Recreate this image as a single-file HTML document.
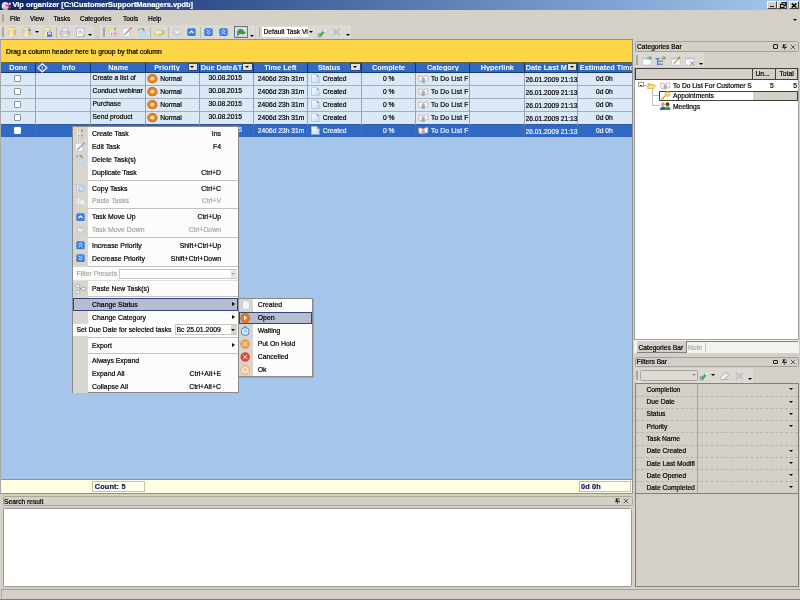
<!DOCTYPE html><html><head><meta charset="utf-8"><style>
*{box-sizing:border-box;margin:0;padding:0}
html,body{width:800px;height:600px;overflow:hidden;background:#d4d0c8;font-family:"Liberation Sans",sans-serif;font-size:6.7px;color:#000}
.ab{position:absolute}
.t{position:absolute;white-space:nowrap;line-height:1;-webkit-text-stroke-width:0.2px}
.hd{position:absolute;white-space:nowrap;line-height:1;color:#fff;font-weight:bold;font-size:7.3px;text-align:center}
.fb{position:absolute;width:8.5px;height:6.4px;background:#e2e0da;box-shadow:0 0 0 0.8px #23407a}
.fb:after{content:"";position:absolute;left:1.95px;top:1.8px;border-left:2.3px solid transparent;border-right:2.3px solid transparent;border-top:2.6px solid #000}
.cb{position:absolute;width:7px;height:6.7px;background:#fff;border:1px solid #8b9299;border-radius:1px}
.sep{position:absolute;height:1px;background:#c5c2bb}
.mi{position:absolute;white-space:nowrap;line-height:1;font-size:6.9px;-webkit-text-stroke-width:0.2px}
.sc{position:absolute;white-space:nowrap;line-height:1;text-align:right;font-size:6.9px;-webkit-text-stroke-width:0.2px}
.dis{color:#a7a6a4}
.arr{position:absolute;width:0;height:0;border-top:2.5px solid transparent;border-bottom:2.5px solid transparent;border-left:3px solid #000}
.dd{position:absolute;width:0;height:0;border-left:2.5px solid transparent;border-right:2.5px solid transparent;border-top:2.5px solid #000}
</style></head><body><div id="root" style="position:absolute;left:0;top:0;width:800px;height:600px;overflow:hidden;background:#d4d0c8;will-change:transform">
<div class="ab" style="left:0;top:0;width:800px;height:10px;background:linear-gradient(to right,#0a246a,#a6caf0)"></div>
<svg class="ab" style="left:1px;top:0.5px" width="11" height="9.5" viewBox="0 0 11 9.5"><ellipse cx="4.2" cy="4.8" rx="3.6" ry="3.9" fill="#e4d8f4"/><ellipse cx="4.5" cy="7.5" rx="3" ry="1.3" fill="#a8b0e0"/><path d="M4.5 4Q7 4.5 9.8 6.5" stroke="#c83848" stroke-width="1.6" fill="none"/><circle cx="8.8" cy="2.8" r="1.3" fill="#f0b0c8"/></svg>
<div class="t" style="left:12.5px;top:1.3px;font-weight:bold;font-size:7.4px;color:#fff">Vip organizer [C:\CustomerSupportManagers.vpdb]</div>
<div class="ab" style="left:767px;top:1px;width:10px;height:8.4px;background:#d4d0c8;border-top:1px solid #fff;border-left:1px solid #fff;border-right:1px solid #404040;border-bottom:1px solid #404040"></div>
<div class="ab" style="left:777.3px;top:1px;width:10px;height:8.4px;background:#d4d0c8;border-top:1px solid #fff;border-left:1px solid #fff;border-right:1px solid #404040;border-bottom:1px solid #404040"></div>
<div class="ab" style="left:788.5px;top:1px;width:10px;height:8.4px;background:#d4d0c8;border-top:1px solid #fff;border-left:1px solid #fff;border-right:1px solid #404040;border-bottom:1px solid #404040"></div>
<div class="ab" style="left:770px;top:6.2px;width:4px;height:1.3px;background:#202020"></div>
<svg class="ab" style="left:779.5px;top:2.3px" width="6" height="6" viewBox="0 0 6 6"><rect x="2" y="0.5" width="3.5" height="3" fill="none" stroke="#000" stroke-width="0.9"/><rect x="0.5" y="2.5" width="3.5" height="3" fill="#d4d0c8" stroke="#000" stroke-width="0.9"/></svg>
<svg class="ab" style="left:790.5px;top:2.5px" width="6" height="5" viewBox="0 0 6 5"><path d="M0.8 0.4L5.4 4.6M5.4 0.4L0.8 4.6" stroke="#000" stroke-width="1.3"/></svg>
<div class="ab" style="left:2px;top:13.5px;width:1.6px;height:8px;background:#aaa79f;border-radius:0.8px"></div>
<div class="t" style="left:10px;top:15.7px;font-size:6.5px">File</div>
<div class="t" style="left:30px;top:15.7px;font-size:6.5px">View</div>
<div class="t" style="left:53.6px;top:15.7px;font-size:6.5px">Tasks</div>
<div class="t" style="left:80px;top:15.7px;font-size:6.5px">Categories</div>
<div class="t" style="left:123px;top:15.7px;font-size:6.5px">Tools</div>
<div class="t" style="left:148px;top:15.7px;font-size:6.5px">Help</div>
<div class="dd" style="left:793px;top:19px"></div>
<div class="ab" style="left:0;top:25px;width:94px;height:14px;background:#dcd9d2"></div>
<div class="ab" style="left:100px;top:25px;width:155px;height:14px;background:#dcd9d2"></div>
<div class="ab" style="left:256px;top:25px;width:95px;height:14px;background:#dcd9d2"></div>
<div class="ab" style="left:2px;top:27.3px;width:1.6px;height:9.4px;background:#aaa79f;border-radius:0.8px"></div>
<div class="ab" style="left:103px;top:27.3px;width:1.6px;height:9.4px;background:#aaa79f;border-radius:0.8px"></div>
<div class="ab" style="left:258.5px;top:27.3px;width:1.6px;height:9.4px;background:#aaa79f;border-radius:0.8px"></div>
<div class="ab" style="left:55.5px;top:26.5px;width:1px;height:11.5px;background:#bcb9b1"></div>
<div class="ab" style="left:150.3px;top:26.5px;width:1px;height:11.5px;background:#bcb9b1"></div>
<div class="ab" style="left:168px;top:26.5px;width:1px;height:11.5px;background:#bcb9b1"></div>
<div class="ab" style="left:200px;top:26.5px;width:1px;height:11.5px;background:#bcb9b1"></div>
<svg class="ab" style="left:7px;top:27px" width="10" height="10" viewBox="0 0 10 10"><defs><linearGradient id="dbg" x1="0" x2="1"><stop offset="0" stop-color="#d8c898"/><stop offset="0.4" stop-color="#fffbe8"/><stop offset="1" stop-color="#c8b078"/></linearGradient></defs><path d="M1 2V8.2Q5 10.2 9 8.2V2Z" fill="url(#dbg)"/><ellipse cx="5" cy="2" rx="4" ry="1.5" fill="#f8ecc0" stroke="#c0a060" stroke-width="0.5"/><path d="M1 4.3Q5 6 9 4.3M1 6.4Q5 8.1 9 6.4" stroke="#d8c088" stroke-width="0.5" fill="none"/><circle cx="2" cy="2" r="1.6" fill="#ffe060"/></svg>
<svg class="ab" style="left:22px;top:27px" width="10" height="10" viewBox="0 0 10 10"><defs><linearGradient id="dbg" x1="0" x2="1"><stop offset="0" stop-color="#d8c898"/><stop offset="0.4" stop-color="#fffbe8"/><stop offset="1" stop-color="#c8b078"/></linearGradient></defs><path d="M1 2V8.2Q5 10.2 9 8.2V2Z" fill="url(#dbg)"/><ellipse cx="5" cy="2" rx="4" ry="1.5" fill="#f8ecc0" stroke="#c0a060" stroke-width="0.5"/><path d="M1 4.3Q5 6 9 4.3M1 6.4Q5 8.1 9 6.4" stroke="#d8c088" stroke-width="0.5" fill="none"/><path d="M6 0.5L9.5 3.5L7 4Z" fill="#5080c8"/></svg>
<div class="dd" style="left:34.6px;top:30.8px;border-left-width:2px;border-right-width:2px;border-top-width:2.2px"></div>
<svg class="ab" style="left:42.4px;top:27px" width="10" height="10" viewBox="0 0 10 10"><defs><linearGradient id="dbg" x1="0" x2="1"><stop offset="0" stop-color="#d8c898"/><stop offset="0.4" stop-color="#fffbe8"/><stop offset="1" stop-color="#c8b078"/></linearGradient></defs><path d="M1 2V8.2Q5 10.2 9 8.2V2Z" fill="url(#dbg)"/><ellipse cx="5" cy="2" rx="4" ry="1.5" fill="#f8ecc0" stroke="#c0a060" stroke-width="0.5"/><path d="M1 4.3Q5 6 9 4.3M1 6.4Q5 8.1 9 6.4" stroke="#d8c088" stroke-width="0.5" fill="none"/><rect x="5" y="5" width="5" height="5" fill="#6a78c0"/><rect x="6" y="5.5" width="3" height="1.8" fill="#e8e8f8"/></svg>
<svg class="ab" style="left:59.8px;top:27.7px" width="10" height="9" viewBox="0 0 10 9"><rect x="2.5" y="0.5" width="5" height="3" fill="#fff" stroke="#a0a0a0" stroke-width="0.5"/><rect x="0.5" y="3" width="9" height="4" rx="1" fill="#d8d8d8" stroke="#909090" stroke-width="0.5"/><rect x="2.5" y="6" width="5" height="2.5" fill="#fff" stroke="#a0a0a0" stroke-width="0.5"/><rect x="7.5" y="4" width="1" height="0.8" fill="#50a050"/></svg>
<svg class="ab" style="left:75.6px;top:27.7px" width="9" height="9" viewBox="0 0 9 9"><rect x="0.5" y="0.5" width="7.5" height="8" fill="#fff" stroke="#98a0b0" stroke-width="0.6"/><rect x="1.8" y="2" width="5" height="4.5" fill="#c8e4f8"/><path d="M2.5 4.5L4 3L6 5" stroke="#80b8e0" stroke-width="0.6" fill="none"/><path d="M6 8.5L8.5 6V8.5Z" fill="#e8a060"/></svg>
<div class="dd" style="left:87.6px;top:34.2px;border-left-width:2.1px;border-right-width:2.1px;border-top-width:2.3px"></div>
<svg class="ab" style="left:108px;top:27.4px" width="10" height="10" viewBox="0 0 10 10"><path d="M0.5 0.8H3.5L4.5 1.8H6.5V4.5H0.5Z" fill="#f8e488" stroke="#e0c860" stroke-width="0.4"/><rect x="6.5" y="0.5" width="1.5" height="2.5" fill="#8098c8"/><rect x="1.5" y="4" width="8" height="5.5" fill="#f4f4fa" stroke="#b8c0d8" stroke-width="0.5"/><circle cx="6.8" cy="6.8" r="2" fill="#fff" stroke="#e88890" stroke-width="0.8"/><circle cx="6.8" cy="6.8" r="0.8" fill="#505060"/><rect x="3" y="5.5" width="1" height="3" fill="#9098c0"/></svg>
<svg class="ab" style="left:122.3px;top:27.4px" width="11" height="10" viewBox="0 0 11 10"><rect x="0.5" y="1.2" width="7" height="8" fill="#fafbff" stroke="#b0b4c8" stroke-width="0.5"/><path d="M2.2 7.8L8 2.2" stroke="#9898b8" stroke-width="1.5"/><circle cx="8.8" cy="1.4" r="1.1" fill="#f09050"/></svg>
<svg class="ab" style="left:136.9px;top:27px" width="10" height="10" viewBox="0 0 10 10"><path d="M0.5 2.5L2.8 0.8L2.8 4Z" fill="#90a0d0"/><path d="M4 1.2Q7 0.5 8 3.2L6.2 3.6L8.8 5.2Z" fill="#48a860"/><ellipse cx="6" cy="7.2" rx="3.2" ry="2.5" fill="#c0e0f8" stroke="#98c8e8" stroke-width="0.4"/></svg>
<svg class="ab" style="left:153.8px;top:29.2px" width="11" height="7" viewBox="0 0 11 7"><path d="M0.5 3.5L4 0.8L9.5 2.2L10 4.5L7 5.2L6 6.5L4.5 5.5L1 5.2Z" fill="#f4e8a0" stroke="#c0a858" stroke-width="0.6"/><circle cx="3" cy="3.2" r="1.2" fill="#fff8d0"/><path d="M8.8 2.5L9.5 5M7 5.2L6.2 6.5" stroke="#908050" stroke-width="0.7"/></svg>
<svg class="ab" style="left:172.5px;top:28px" width="9" height="8" viewBox="0 0 9 8"><rect x="0.3" y="0.3" width="8.4" height="7.6" rx="1.5" fill="#d0d0d0"/><path d="M2.5 3L4.5 5L6.5 3" stroke="#fff" stroke-width="1.1" fill="none"/></svg>
<svg class="ab" style="left:186.7px;top:28px" width="9" height="8" viewBox="0 0 9 8"><rect x="0.3" y="0.3" width="8.4" height="7.6" rx="1.5" fill="#3b7fd8"/><path d="M2.5 5L4.5 3L6.5 5" stroke="#fff" stroke-width="1.1" fill="none"/></svg>
<svg class="ab" style="left:204px;top:28px" width="9" height="8" viewBox="0 0 9 8"><rect x="0.3" y="0.3" width="8.4" height="7.6" rx="1.5" fill="#3b7fd8"/><path d="M2.5 1.8L4.5 3.5L6.5 1.8M2.5 4.3L4.5 6L6.5 4.3" stroke="#fff" stroke-width="0.9" fill="none"/></svg>
<svg class="ab" style="left:218.8px;top:28px" width="9" height="8" viewBox="0 0 9 8"><rect x="0.3" y="0.3" width="8.4" height="7.6" rx="1.5" fill="#3b7fd8"/><path d="M2.5 3.7L4.5 2L6.5 3.7M2.5 6.2L4.5 4.5L6.5 6.2" stroke="#fff" stroke-width="0.9" fill="none"/></svg>
<div class="ab" style="left:234.1px;top:25.8px;width:14px;height:12.7px;background:#dcdce6;border:1px solid #6a7090"></div>
<svg class="ab" style="left:236px;top:28px" width="10" height="9" viewBox="0 0 10 9"><path d="M1.5 8.5V3Q3 0.5 6 1.5L9.5 5Q7 6.5 4 5.5" fill="#30a030" stroke="#208020" stroke-width="0.5"/><path d="M1.8 8.5V3" stroke="#90a090" stroke-width="0.8"/><path d="M1 8.7H8" stroke="#b0c0b0" stroke-width="0.5"/></svg>
<div class="dd" style="left:250.3px;top:35px;border-left-width:2.1px;border-right-width:2.1px;border-top-width:2.3px"></div>
<div class="ab" style="left:261.9px;top:26.9px;width:52px;height:10.5px;background:#fff"></div>
<div class="ab" style="left:308.1px;top:26.9px;width:5.7px;height:10.5px;background:#dedbd4"></div>
<div class="dd" style="left:308.8px;top:31px;border-left-width:2.1px;border-right-width:2.1px;border-top-width:2.3px"></div>
<div class="t" style="left:263.5px;top:29px;width:44px;overflow:hidden">Default Task View</div>
<svg class="ab" style="left:316.7px;top:27.6px" width="11" height="10" viewBox="0 0 11 10"><rect x="0.5" y="5" width="4" height="4.5" fill="#a0a8e0"/><path d="M3 8L8 2" stroke="#40b040" stroke-width="2.5"/><circle cx="8" cy="2.5" r="2" fill="#e8f0f8" stroke="#a8c0d8" stroke-width="0.5"/></svg>
<svg class="ab" style="left:331.7px;top:28.4px" width="9" height="8" viewBox="0 0 9 8"><path d="M1 1L8 7M8 1L1 7" stroke="#c0c0c0" stroke-width="1.8"/></svg>
<div class="dd" style="left:345.6px;top:34.4px;border-left-width:2.1px;border-right-width:2.1px;border-top-width:2.3px"></div>
<div class="ab" style="left:0;top:39px;width:633px;height:455px;background:#a6c5eb;border:1px solid #909090;border-left-color:#a8a8a8"></div>
<div class="ab" style="left:1px;top:40px;width:631px;height:22px;background:#fdd546"></div>
<div class="t" style="left:6px;top:48.5px;font-size:6.8px">Drag a column header here to group by that column</div>
<div class="ab" style="left:1px;top:62px;width:631px;height:11px;background:#316ac5;border-top:1px solid #6a6438;border-bottom:1px solid #1c3a6a"></div>
<div class="ab" style="left:1px;top:73px;width:631px;height:12px;background:#dbe8f5"></div>
<div class="ab" style="left:1px;top:85px;width:631px;height:1px;background:#a4adb8"></div>
<div class="ab" style="left:1px;top:86px;width:631px;height:12px;background:#dbe8f5"></div>
<div class="ab" style="left:1px;top:98px;width:631px;height:1px;background:#a4adb8"></div>
<div class="ab" style="left:1px;top:99px;width:631px;height:12px;background:#dbe8f5"></div>
<div class="ab" style="left:1px;top:111px;width:631px;height:1px;background:#a4adb8"></div>
<div class="ab" style="left:1px;top:112px;width:631px;height:12px;background:#dbe8f5"></div>
<div class="ab" style="left:1px;top:124px;width:631px;height:13px;background:#316ac5;border-top:1px solid #2c5aa6"></div>
<div class="ab" style="left:35.0px;top:63px;width:1px;height:10px;background:#1c3566"></div>
<div class="ab" style="left:35.0px;top:73px;width:1px;height:52px;background:#9aa3ad"></div>
<div class="ab" style="left:35.0px;top:125px;width:1px;height:12px;background:#4a6ea8"></div>
<div class="ab" style="left:90.0px;top:63px;width:1px;height:10px;background:#1c3566"></div>
<div class="ab" style="left:90.0px;top:73px;width:1px;height:52px;background:#9aa3ad"></div>
<div class="ab" style="left:90.0px;top:125px;width:1px;height:12px;background:#4a6ea8"></div>
<div class="ab" style="left:145.0px;top:63px;width:1px;height:10px;background:#1c3566"></div>
<div class="ab" style="left:145.0px;top:73px;width:1px;height:52px;background:#9aa3ad"></div>
<div class="ab" style="left:145.0px;top:125px;width:1px;height:12px;background:#4a6ea8"></div>
<div class="ab" style="left:199.0px;top:63px;width:1px;height:10px;background:#1c3566"></div>
<div class="ab" style="left:199.0px;top:73px;width:1px;height:52px;background:#9aa3ad"></div>
<div class="ab" style="left:199.0px;top:125px;width:1px;height:12px;background:#4a6ea8"></div>
<div class="ab" style="left:253.0px;top:63px;width:1px;height:10px;background:#1c3566"></div>
<div class="ab" style="left:253.0px;top:73px;width:1px;height:52px;background:#9aa3ad"></div>
<div class="ab" style="left:253.0px;top:125px;width:1px;height:12px;background:#4a6ea8"></div>
<div class="ab" style="left:307.0px;top:63px;width:1px;height:10px;background:#1c3566"></div>
<div class="ab" style="left:307.0px;top:73px;width:1px;height:52px;background:#9aa3ad"></div>
<div class="ab" style="left:307.0px;top:125px;width:1px;height:12px;background:#4a6ea8"></div>
<div class="ab" style="left:361.0px;top:63px;width:1px;height:10px;background:#1c3566"></div>
<div class="ab" style="left:361.0px;top:73px;width:1px;height:52px;background:#9aa3ad"></div>
<div class="ab" style="left:361.0px;top:125px;width:1px;height:12px;background:#4a6ea8"></div>
<div class="ab" style="left:415.0px;top:63px;width:1px;height:10px;background:#1c3566"></div>
<div class="ab" style="left:415.0px;top:73px;width:1px;height:52px;background:#9aa3ad"></div>
<div class="ab" style="left:415.0px;top:125px;width:1px;height:12px;background:#4a6ea8"></div>
<div class="ab" style="left:469.0px;top:63px;width:1px;height:10px;background:#1c3566"></div>
<div class="ab" style="left:469.0px;top:73px;width:1px;height:52px;background:#9aa3ad"></div>
<div class="ab" style="left:469.0px;top:125px;width:1px;height:12px;background:#4a6ea8"></div>
<div class="ab" style="left:524.0px;top:63px;width:1px;height:10px;background:#1c3566"></div>
<div class="ab" style="left:524.0px;top:73px;width:1px;height:52px;background:#9aa3ad"></div>
<div class="ab" style="left:524.0px;top:125px;width:1px;height:12px;background:#4a6ea8"></div>
<div class="ab" style="left:577.0px;top:63px;width:1px;height:10px;background:#1c3566"></div>
<div class="ab" style="left:577.0px;top:73px;width:1px;height:52px;background:#9aa3ad"></div>
<div class="ab" style="left:577.0px;top:125px;width:1px;height:12px;background:#4a6ea8"></div>
<div class="hd" style="left:1px;top:64.2px;width:34.5px;overflow:hidden;text-align:center">Done</div>
<div class="hd" style="left:47px;top:64.2px;width:43.5px;overflow:hidden;text-align:center">Info</div>
<div class="hd" style="left:90.5px;top:64.2px;width:55.5px;overflow:hidden;text-align:center">Name</div>
<div class="hd" style="left:146px;top:64.2px;width:42px;overflow:hidden;text-align:center">Priority</div>
<div class="hd" style="left:200.8px;top:64.2px;width:42.19999999999999px;overflow:hidden;text-align:left">Due Date&amp;T</div>
<div class="hd" style="left:253.3px;top:64.2px;width:54.19999999999999px;overflow:hidden;text-align:center">Time Left</div>
<div class="hd" style="left:307.5px;top:64.2px;width:43.19999999999999px;overflow:hidden;text-align:center">Status</div>
<div class="hd" style="left:361.3px;top:64.2px;width:54.5px;overflow:hidden;text-align:center">Complete</div>
<div class="hd" style="left:415.8px;top:64.2px;width:54.19999999999999px;overflow:hidden;text-align:center">Category</div>
<div class="hd" style="left:470px;top:64.2px;width:54.60000000000002px;overflow:hidden;text-align:center">Hyperlink</div>
<div class="hd" style="left:525.8px;top:64.2px;width:41.60000000000002px;overflow:hidden;text-align:left">Date Last M</div>
<div class="hd" style="left:579.8px;top:64.2px;width:52.200000000000045px;overflow:hidden;text-align:left">Estimated Time</div>
<svg class="ab" style="left:36.6px;top:62.8px" width="11" height="10" viewBox="0 0 11 10"><path d="M5.3 0.8L9.8 4.8L5.3 8.8L0.8 4.8Z" fill="#2a4fa0" stroke="#e8f0ff" stroke-width="1.3"/><rect x="4.7" y="2.8" width="1.2" height="4" fill="#a8c8f8"/></svg>
<div class="fb" style="left:188.5px;top:64.1px"></div>
<div class="fb" style="left:243px;top:64.1px"></div>
<div class="fb" style="left:351px;top:64.1px"></div>
<div class="fb" style="left:567.7px;top:64.1px"></div>
<div class="cb" style="left:14.3px;top:75.3px;"></div>
<div class="t" style="left:92.6px;top:75.1px;color:#000">Create a list of</div>
<svg class="ab" style="left:147px;top:73.7px" width="11" height="10" viewBox="0 0 11 10"><defs><radialGradient id="pg0" cx="0.5" cy="0.5" r="0.5"><stop offset="0" stop-color="#fffbe8"/><stop offset="0.3" stop-color="#fce0b0"/><stop offset="0.45" stop-color="#f09030"/><stop offset="0.85" stop-color="#e07818"/><stop offset="1" stop-color="#b85a10"/></radialGradient></defs><ellipse cx="5.4" cy="4.7" rx="5.1" ry="4.6" fill="url(#pg0)"/></svg>
<div class="t" style="left:160.2px;top:76.3px;color:#000">Normal</div>
<div class="t" style="left:208.5px;top:75.4px;color:#000">30.08.2015</div>
<div class="t" style="left:257.8px;top:76.3px;color:#000">2406d 23h 31m</div>
<svg class="ab" style="left:311px;top:74px" width="9" height="9" viewBox="0 0 9 9"><defs><linearGradient id="dg0" x1="0" y1="0" x2="1" y2="1"><stop offset="0" stop-color="#ffffff"/><stop offset="1" stop-color="#b8d8f4"/></linearGradient></defs><path d="M0.5 0.5H5.8L8.3 3V8.5H0.5Z" fill="url(#dg0)" stroke="#a8b8d0" stroke-width="0.6"/><path d="M5.8 0.5V3H8.3Z" fill="#8898b8"/></svg>
<div class="t" style="left:322.7px;top:76.3px;color:#000">Created</div>
<div class="t" style="left:383px;top:76.3px;color:#000">0 %</div>
<svg class="ab" style="left:417.8px;top:74.8px" width="11" height="8" viewBox="0 0 11 8"><path d="M0.6 1.2Q3 0.6 5.2 2.2V7Q3 5.8 1.2 6.4Z" fill="#fff" stroke="#e8a878" stroke-width="0.9"/><path d="M5.2 2.2Q7.5 0.2 9.9 0.8L9.6 5.8Q7.2 5.4 5.2 7Z" fill="#fff8f0" stroke="#e0b088" stroke-width="0.9"/><path d="M3.6 2.8Q4.6 3 5.2 3.6Q5.8 3 6.8 2.6V6.2Q5.8 6.4 5.2 7Q4.6 6.4 3.6 6.2Z" fill="#90b0e0"/><path d="M3.5 7.2H7" stroke="#6070a0" stroke-width="0.6"/></svg>
<div class="t" style="left:431px;top:76.3px;color:#000;letter-spacing:0.15px">To Do List F</div>
<div class="t" style="left:525.5px;top:76.7px;color:#000;width:52px;overflow:hidden">26.01.2009 21:13</div>
<div class="t" style="left:596px;top:76.3px;color:#000">0d 0h</div>
<div class="cb" style="left:14.3px;top:88.3px;"></div>
<div class="t" style="left:92.6px;top:88.1px;color:#000">Conduct webinar</div>
<svg class="ab" style="left:147px;top:86.7px" width="11" height="10" viewBox="0 0 11 10"><defs><radialGradient id="pg1" cx="0.5" cy="0.5" r="0.5"><stop offset="0" stop-color="#fffbe8"/><stop offset="0.3" stop-color="#fce0b0"/><stop offset="0.45" stop-color="#f09030"/><stop offset="0.85" stop-color="#e07818"/><stop offset="1" stop-color="#b85a10"/></radialGradient></defs><ellipse cx="5.4" cy="4.7" rx="5.1" ry="4.6" fill="url(#pg1)"/></svg>
<div class="t" style="left:160.2px;top:89.3px;color:#000">Normal</div>
<div class="t" style="left:208.5px;top:88.4px;color:#000">30.08.2015</div>
<div class="t" style="left:257.8px;top:89.3px;color:#000">2406d 23h 31m</div>
<svg class="ab" style="left:311px;top:87px" width="9" height="9" viewBox="0 0 9 9"><defs><linearGradient id="dg1" x1="0" y1="0" x2="1" y2="1"><stop offset="0" stop-color="#ffffff"/><stop offset="1" stop-color="#b8d8f4"/></linearGradient></defs><path d="M0.5 0.5H5.8L8.3 3V8.5H0.5Z" fill="url(#dg1)" stroke="#a8b8d0" stroke-width="0.6"/><path d="M5.8 0.5V3H8.3Z" fill="#8898b8"/></svg>
<div class="t" style="left:322.7px;top:89.3px;color:#000">Created</div>
<div class="t" style="left:383px;top:89.3px;color:#000">0 %</div>
<svg class="ab" style="left:417.8px;top:87.8px" width="11" height="8" viewBox="0 0 11 8"><path d="M0.6 1.2Q3 0.6 5.2 2.2V7Q3 5.8 1.2 6.4Z" fill="#fff" stroke="#e8a878" stroke-width="0.9"/><path d="M5.2 2.2Q7.5 0.2 9.9 0.8L9.6 5.8Q7.2 5.4 5.2 7Z" fill="#fff8f0" stroke="#e0b088" stroke-width="0.9"/><path d="M3.6 2.8Q4.6 3 5.2 3.6Q5.8 3 6.8 2.6V6.2Q5.8 6.4 5.2 7Q4.6 6.4 3.6 6.2Z" fill="#90b0e0"/><path d="M3.5 7.2H7" stroke="#6070a0" stroke-width="0.6"/></svg>
<div class="t" style="left:431px;top:89.3px;color:#000;letter-spacing:0.15px">To Do List F</div>
<div class="t" style="left:525.5px;top:89.7px;color:#000;width:52px;overflow:hidden">26.01.2009 21:13</div>
<div class="t" style="left:596px;top:89.3px;color:#000">0d 0h</div>
<div class="cb" style="left:14.3px;top:101.3px;"></div>
<div class="t" style="left:92.6px;top:101.1px;color:#000">Purchase</div>
<svg class="ab" style="left:147px;top:99.7px" width="11" height="10" viewBox="0 0 11 10"><defs><radialGradient id="pg2" cx="0.5" cy="0.5" r="0.5"><stop offset="0" stop-color="#fffbe8"/><stop offset="0.3" stop-color="#fce0b0"/><stop offset="0.45" stop-color="#f09030"/><stop offset="0.85" stop-color="#e07818"/><stop offset="1" stop-color="#b85a10"/></radialGradient></defs><ellipse cx="5.4" cy="4.7" rx="5.1" ry="4.6" fill="url(#pg2)"/></svg>
<div class="t" style="left:160.2px;top:102.3px;color:#000">Normal</div>
<div class="t" style="left:208.5px;top:101.4px;color:#000">30.08.2015</div>
<div class="t" style="left:257.8px;top:102.3px;color:#000">2406d 23h 31m</div>
<svg class="ab" style="left:311px;top:100px" width="9" height="9" viewBox="0 0 9 9"><defs><linearGradient id="dg2" x1="0" y1="0" x2="1" y2="1"><stop offset="0" stop-color="#ffffff"/><stop offset="1" stop-color="#b8d8f4"/></linearGradient></defs><path d="M0.5 0.5H5.8L8.3 3V8.5H0.5Z" fill="url(#dg2)" stroke="#a8b8d0" stroke-width="0.6"/><path d="M5.8 0.5V3H8.3Z" fill="#8898b8"/></svg>
<div class="t" style="left:322.7px;top:102.3px;color:#000">Created</div>
<div class="t" style="left:383px;top:102.3px;color:#000">0 %</div>
<svg class="ab" style="left:417.8px;top:100.8px" width="11" height="8" viewBox="0 0 11 8"><path d="M0.6 1.2Q3 0.6 5.2 2.2V7Q3 5.8 1.2 6.4Z" fill="#fff" stroke="#e8a878" stroke-width="0.9"/><path d="M5.2 2.2Q7.5 0.2 9.9 0.8L9.6 5.8Q7.2 5.4 5.2 7Z" fill="#fff8f0" stroke="#e0b088" stroke-width="0.9"/><path d="M3.6 2.8Q4.6 3 5.2 3.6Q5.8 3 6.8 2.6V6.2Q5.8 6.4 5.2 7Q4.6 6.4 3.6 6.2Z" fill="#90b0e0"/><path d="M3.5 7.2H7" stroke="#6070a0" stroke-width="0.6"/></svg>
<div class="t" style="left:431px;top:102.3px;color:#000;letter-spacing:0.15px">To Do List F</div>
<div class="t" style="left:525.5px;top:102.7px;color:#000;width:52px;overflow:hidden">26.01.2009 21:13</div>
<div class="t" style="left:596px;top:102.3px;color:#000">0d 0h</div>
<div class="cb" style="left:14.3px;top:114.3px;"></div>
<div class="t" style="left:92.6px;top:114.1px;color:#000">Send product</div>
<svg class="ab" style="left:147px;top:112.7px" width="11" height="10" viewBox="0 0 11 10"><defs><radialGradient id="pg3" cx="0.5" cy="0.5" r="0.5"><stop offset="0" stop-color="#fffbe8"/><stop offset="0.3" stop-color="#fce0b0"/><stop offset="0.45" stop-color="#f09030"/><stop offset="0.85" stop-color="#e07818"/><stop offset="1" stop-color="#b85a10"/></radialGradient></defs><ellipse cx="5.4" cy="4.7" rx="5.1" ry="4.6" fill="url(#pg3)"/></svg>
<div class="t" style="left:160.2px;top:115.3px;color:#000">Normal</div>
<div class="t" style="left:208.5px;top:114.4px;color:#000">30.08.2015</div>
<div class="t" style="left:257.8px;top:115.3px;color:#000">2406d 23h 31m</div>
<svg class="ab" style="left:311px;top:113px" width="9" height="9" viewBox="0 0 9 9"><defs><linearGradient id="dg3" x1="0" y1="0" x2="1" y2="1"><stop offset="0" stop-color="#ffffff"/><stop offset="1" stop-color="#b8d8f4"/></linearGradient></defs><path d="M0.5 0.5H5.8L8.3 3V8.5H0.5Z" fill="url(#dg3)" stroke="#a8b8d0" stroke-width="0.6"/><path d="M5.8 0.5V3H8.3Z" fill="#8898b8"/></svg>
<div class="t" style="left:322.7px;top:115.3px;color:#000">Created</div>
<div class="t" style="left:383px;top:115.3px;color:#000">0 %</div>
<svg class="ab" style="left:417.8px;top:113.8px" width="11" height="8" viewBox="0 0 11 8"><path d="M0.6 1.2Q3 0.6 5.2 2.2V7Q3 5.8 1.2 6.4Z" fill="#fff" stroke="#e8a878" stroke-width="0.9"/><path d="M5.2 2.2Q7.5 0.2 9.9 0.8L9.6 5.8Q7.2 5.4 5.2 7Z" fill="#fff8f0" stroke="#e0b088" stroke-width="0.9"/><path d="M3.6 2.8Q4.6 3 5.2 3.6Q5.8 3 6.8 2.6V6.2Q5.8 6.4 5.2 7Q4.6 6.4 3.6 6.2Z" fill="#90b0e0"/><path d="M3.5 7.2H7" stroke="#6070a0" stroke-width="0.6"/></svg>
<div class="t" style="left:431px;top:115.3px;color:#000;letter-spacing:0.15px">To Do List F</div>
<div class="t" style="left:525.5px;top:115.7px;color:#000;width:52px;overflow:hidden">26.01.2009 21:13</div>
<div class="t" style="left:596px;top:115.3px;color:#000">0d 0h</div>
<div class="cb" style="left:14.3px;top:127.3px;border-color:#fff"></div>
<svg class="ab" style="left:147px;top:125.7px" width="11" height="10" viewBox="0 0 11 10"><defs><radialGradient id="pg4" cx="0.5" cy="0.5" r="0.5"><stop offset="0" stop-color="#fffbe8"/><stop offset="0.3" stop-color="#fce0b0"/><stop offset="0.45" stop-color="#f09030"/><stop offset="0.85" stop-color="#e07818"/><stop offset="1" stop-color="#b85a10"/></radialGradient></defs><ellipse cx="5.4" cy="4.7" rx="5.1" ry="4.6" fill="url(#pg4)"/></svg>
<div class="t" style="left:160.2px;top:128.3px;color:#eef3fc">Normal</div>
<div class="t" style="left:208.5px;top:127.4px;color:#eef3fc">30.08.2015</div>
<div class="t" style="left:257.8px;top:128.3px;color:#eef3fc">2406d 23h 31m</div>
<svg class="ab" style="left:311px;top:126px" width="9" height="9" viewBox="0 0 9 9"><defs><linearGradient id="dg4" x1="0" y1="0" x2="1" y2="1"><stop offset="0" stop-color="#ffffff"/><stop offset="1" stop-color="#b8d8f4"/></linearGradient></defs><path d="M0.5 0.5H5.8L8.3 3V8.5H0.5Z" fill="url(#dg4)" stroke="#a8b8d0" stroke-width="0.6"/><path d="M5.8 0.5V3H8.3Z" fill="#8898b8"/></svg>
<div class="t" style="left:322.7px;top:128.3px;color:#eef3fc">Created</div>
<div class="t" style="left:383px;top:128.3px;color:#eef3fc">0 %</div>
<svg class="ab" style="left:417.8px;top:126.8px" width="11" height="8" viewBox="0 0 11 8"><path d="M0.6 1.2Q3 0.6 5.2 2.2V7Q3 5.8 1.2 6.4Z" fill="#fff" stroke="#e8a878" stroke-width="0.9"/><path d="M5.2 2.2Q7.5 0.2 9.9 0.8L9.6 5.8Q7.2 5.4 5.2 7Z" fill="#fff8f0" stroke="#e0b088" stroke-width="0.9"/><path d="M3.6 2.8Q4.6 3 5.2 3.6Q5.8 3 6.8 2.6V6.2Q5.8 6.4 5.2 7Q4.6 6.4 3.6 6.2Z" fill="#90b0e0"/><path d="M3.5 7.2H7" stroke="#6070a0" stroke-width="0.6"/></svg>
<div class="t" style="left:431px;top:128.3px;color:#eef3fc;letter-spacing:0.15px">To Do List F</div>
<div class="t" style="left:525.5px;top:128.7px;color:#eef3fc;width:52px;overflow:hidden">26.01.2009 21:13</div>
<div class="t" style="left:596px;top:128.3px;color:#eef3fc">0d 0h</div>
<div class="ab" style="left:1px;top:479px;width:631px;height:1px;background:#909090"></div>
<div class="ab" style="left:1px;top:480px;width:631px;height:13px;background:#fffee0"></div>
<div class="ab" style="left:92px;top:481.3px;width:52.5px;height:10.5px;border:1px solid #c4c2a8;background:#fffff0"></div>
<div class="t" style="left:94.8px;top:483.2px;color:#10105a;font-weight:bold;font-size:7.3px;letter-spacing:0.15px">Count: 5</div>
<div class="ab" style="left:578.5px;top:481.3px;width:52.5px;height:10.5px;border:1px solid #c4c2a8;background:#fffff0"></div>
<div class="t" style="left:581px;top:483.2px;color:#10105a;font-weight:bold;font-size:7.3px;letter-spacing:0.15px">0d 0h</div>
<div class="ab" style="left:2.5px;top:496px;width:630px;height:9.5px;border:1px solid #aca899;border-radius:1.5px"></div>
<svg class="ab" style="left:614.5px;top:498.3px" width="5" height="6" viewBox="0 0 5 6"><rect x="0.8" y="0.3" width="3.4" height="3.2" fill="#202020"/><rect x="2.6" y="0.6" width="1.2" height="2.6" fill="#d4d0c8"/><rect x="0" y="3.3" width="5" height="0.8" fill="#202020"/><rect x="2.1" y="4" width="0.8" height="1.8" fill="#404040"/></svg>
<svg class="ab" style="left:623px;top:498.3px" width="6" height="6" viewBox="0 0 6 6"><path d="M0.8 0.8L5.2 5.2M5.2 0.8L0.8 5.2" stroke="#404040" stroke-width="0.8"/></svg>
<div class="t" style="left:4px;top:498.5px">Search result</div>
<div class="ab" style="left:2.5px;top:507.5px;width:629px;height:79.5px;background:#fff;border:1px solid #989898;border-radius:1.5px"></div>
<div class="ab" style="left:0.5px;top:589px;width:800px;height:10px;border-top:1px solid #a0a0a0;border-left:1px solid #a8a8a8"></div>
<div class="ab" style="left:0;top:599px;width:800px;height:1px;background:#808080"></div>
<div class="ab" style="left:634.5px;top:41px;width:164px;height:10.5px;border:1px solid #a0a0a0;border-radius:1.5px"></div>
<div class="t" style="left:637px;top:43.8px">Categories Bar</div>
<div class="ab" style="left:634px;top:68px;width:165px;height:272px;background:#fff;border:1px solid #a0a0a0;border-top:0"></div>
<div class="ab" style="left:635px;top:68px;width:163px;height:12px;background:#d4d0c8;border:1px solid #404040"></div>
<div class="ab" style="left:752px;top:69px;width:1px;height:10px;background:#404040"></div>
<div class="ab" style="left:775px;top:69px;width:1px;height:10px;background:#404040"></div>
<div class="t" style="left:755.5px;top:71px">Un...</div>
<div class="t" style="left:779.5px;top:71px">Total</div>
<div class="t" style="left:673px;top:82.5px">To Do List For Customer S</div>
<div class="t" style="left:770px;top:82.5px">5</div>
<div class="t" style="left:793.2px;top:82.5px">5</div>
<div class="ab" style="left:752.5px;top:90.5px;width:45px;height:10px;background:#d4d0c8"></div>
<div class="ab" style="left:658.7px;top:90.5px;width:139.3px;height:10.3px;border:1px solid #404040"></div>
<div class="t" style="left:673px;top:92.5px">Appointments</div>
<div class="t" style="left:673px;top:103.5px">Meetings</div>
<div class="ab" style="left:773px;top:44.400000000000006px;width:4.6px;height:4.2px;border:1px solid #202020;border-radius:1px"></div>
<svg class="ab" style="left:781.5px;top:44.0px" width="5" height="6" viewBox="0 0 5 6"><rect x="0.8" y="0.3" width="3.4" height="3.2" fill="#202020"/><rect x="2.6" y="0.6" width="1.2" height="2.6" fill="#d4d0c8"/><rect x="0" y="3.3" width="5" height="0.8" fill="#202020"/><rect x="2.1" y="4" width="0.8" height="1.8" fill="#404040"/></svg>
<svg class="ab" style="left:789.5px;top:44.0px" width="6" height="6" viewBox="0 0 6 6"><path d="M0.8 0.8L5.2 5.2M5.2 0.8L0.8 5.2" stroke="#404040" stroke-width="0.8"/></svg>
<div class="ab" style="left:773px;top:359.8px;width:4.6px;height:4.2px;border:1px solid #202020;border-radius:1px"></div>
<svg class="ab" style="left:781.5px;top:359.40000000000003px" width="5" height="6" viewBox="0 0 5 6"><rect x="0.8" y="0.3" width="3.4" height="3.2" fill="#202020"/><rect x="2.6" y="0.6" width="1.2" height="2.6" fill="#d4d0c8"/><rect x="0" y="3.3" width="5" height="0.8" fill="#202020"/><rect x="2.1" y="4" width="0.8" height="1.8" fill="#404040"/></svg>
<svg class="ab" style="left:789.5px;top:359.40000000000003px" width="6" height="6" viewBox="0 0 6 6"><path d="M0.8 0.8L5.2 5.2M5.2 0.8L0.8 5.2" stroke="#404040" stroke-width="0.8"/></svg>
<div class="ab" style="left:634.5px;top:52.4px;width:69.5px;height:14.7px;background:#dcd9d2"></div>
<div class="ab" style="left:636.4px;top:55.2px;width:1.5px;height:9.6px;background:#a8a59e"></div>
<svg class="ab" style="left:641.6px;top:55.5px" width="10" height="10" viewBox="0 0 10 10"><rect x="0.5" y="2" width="8.5" height="7" fill="#fbfcfe" stroke="#a8b4c8" stroke-width="0.5"/><rect x="0.5" y="2" width="8.5" height="1.4" fill="#a8c8e8"/><path d="M5.5 2H8.5M7.5 0.5L9.5 2L7.5 3.5" stroke="#30a040" stroke-width="1" fill="none"/></svg>
<svg class="ab" style="left:655.4px;top:55.5px" width="11" height="10" viewBox="0 0 11 10"><rect x="0.5" y="2" width="4" height="1.2" fill="#5078c0"/><rect x="2" y="3" width="1.2" height="6.5" fill="#5078c0"/><rect x="3" y="4.5" width="5" height="1.5" fill="#7090d0"/><rect x="3" y="7.5" width="5" height="1.5" fill="#7090d0"/><path d="M6.5 2H9.5M8.5 0.5L10.5 2L8.5 3.5" stroke="#30a040" stroke-width="1" fill="none"/></svg>
<svg class="ab" style="left:670.7px;top:55.5px" width="10" height="10" viewBox="0 0 10 10"><rect x="0.5" y="2" width="8.5" height="7" fill="#fbfcfe" stroke="#a8b4c8" stroke-width="0.5"/><rect x="0.5" y="2" width="8.5" height="1.4" fill="#a8c8e8"/><path d="M2.5 8L8.5 1.5" stroke="#d0a040" stroke-width="1.2"/><path d="M7.8 2.2L9 1" stroke="#e04040" stroke-width="1.3"/></svg>
<svg class="ab" style="left:685px;top:55.5px" width="10" height="10" viewBox="0 0 10 10"><rect x="0.5" y="2" width="8.5" height="7" fill="#fbfcfe" stroke="#a8b4c8" stroke-width="0.5"/><rect x="0.5" y="2" width="8.5" height="1.4" fill="#a8c8e8"/><path d="M5.5 5.5L9 9M9 5.5L5.5 9" stroke="#e05050" stroke-width="1"/></svg>
<div class="dd" style="left:699.2px;top:62.9px;border-left-width:2.1px;border-right-width:2.1px;border-top-width:2.3px"></div>
<div class="ab" style="left:638.4px;top:82.1px;width:5.2px;height:5.3px;border:1px solid #a0a0a0;background:#fff"></div>
<div class="ab" style="left:639.8px;top:84.5px;width:2.6px;height:0.7px;background:#404040"></div>
<div class="ab" style="left:643.6px;top:84.5px;width:3.5px;height:0.8px;background:#c0c0c0"></div>
<div class="ab" style="left:652px;top:88.5px;width:0.8px;height:17px;background:#c0c0c0"></div>
<div class="ab" style="left:652.5px;top:95px;width:6px;height:0.8px;background:#c0c0c0"></div>
<div class="ab" style="left:652.5px;top:105px;width:7px;height:0.8px;background:#c0c0c0"></div>
<svg class="ab" style="left:647.1px;top:82px" width="9" height="7" viewBox="0 0 9 7"><path d="M0.5 1H3L4 2H7V6.5H0.5Z" fill="#e8c050"/><path d="M1.5 3H8.7L7.5 6.5H0.5Z" fill="#f8e080" stroke="#c8a040" stroke-width="0.4"/></svg>
<svg class="ab" style="left:660.2px;top:81.5px" width="11" height="8" viewBox="0 0 11 8"><path d="M0.6 1.2Q3 0.6 5.2 2.2V7Q3 5.8 1.2 6.4Z" fill="#fff" stroke="#e8a878" stroke-width="0.9"/><path d="M5.2 2.2Q7.5 0.2 9.9 0.8L9.6 5.8Q7.2 5.4 5.2 7Z" fill="#fff8f0" stroke="#e0b088" stroke-width="0.9"/><path d="M3.6 2.8Q4.6 3 5.2 3.6Q5.8 3 6.8 2.6V6.2Q5.8 6.4 5.2 7Q4.6 6.4 3.6 6.2Z" fill="#90b0e0"/></svg>
<svg class="ab" style="left:660.2px;top:91.3px" width="11" height="9" viewBox="0 0 11 9"><circle cx="7.5" cy="3" r="2.5" fill="#f0d060" stroke="#c09830" stroke-width="0.5"/><circle cx="7.8" cy="2.7" r="0.8" fill="#fff"/><path d="M5.8 4.5L1 8.5M2.5 7.3L3.5 8.3M3.5 6.5L4.3 7.3" stroke="#d0a840" stroke-width="1.1"/></svg>
<svg class="ab" style="left:660.2px;top:102.2px" width="11" height="8" viewBox="0 0 11 8"><circle cx="3" cy="2.2" r="1.9" fill="#e8a040"/><path d="M0 8Q0 4.5 3 4.5Q6 4.5 6 8Z" fill="#3060c0"/><circle cx="7.5" cy="2.2" r="1.9" fill="#703010"/><path d="M4.5 8Q4.5 4.5 7.5 4.5Q10.5 4.5 10.5 8Z" fill="#30a040"/></svg>
<div class="ab" style="left:634px;top:340px;width:165px;height:13px;background:#f4f2ec"></div>
<div class="ab" style="left:686px;top:341px;width:112px;height:1px;background:#808080"></div>
<div class="ab" style="left:636.5px;top:341px;width:50px;height:12px;background:#d4d0c8;border-right:1px solid #808080;border-bottom:1px solid #808080"></div>
<div class="t" style="left:638.5px;top:345px">Categories Bar</div>
<div class="t dis" style="left:688px;top:345px">Note</div>
<div class="ab" style="left:705px;top:343px;width:1px;height:9px;background:#c8c5be"></div>
<div class="ab" style="left:634.5px;top:356.5px;width:164px;height:10px;border:1px solid #a0a0a0;border-radius:1.5px"></div>
<div class="t" style="left:636.6px;top:358.8px">Filters Bar</div>
<div class="ab" style="left:634.5px;top:367.5px;width:118.5px;height:15.3px;background:#dcd9d2"></div>
<div class="ab" style="left:636.4px;top:370.5px;width:1.5px;height:9.6px;background:#a8a59e"></div>
<div class="ab" style="left:639.5px;top:369.7px;width:58px;height:11.3px;border:1px solid #a8a59e;border-radius:1.5px;background:#dedbd4"></div>
<div class="dd" style="left:691.8px;top:374.3px;border-top-color:#909090;border-left-width:2px;border-right-width:2px;border-top-width:2.2px"></div>
<svg class="ab" style="left:699.2px;top:370.6px" width="11" height="10" viewBox="0 0 11 10"><rect x="0.5" y="5" width="4" height="4.5" fill="#a0a8e0"/><path d="M3 8L8 2" stroke="#40b040" stroke-width="2.5"/><circle cx="8" cy="2.5" r="2" fill="#e8f0f8" stroke="#a8c0d8" stroke-width="0.5"/></svg>
<div class="dd" style="left:710.8px;top:374.3px;border-left-width:2px;border-right-width:2px;border-top-width:2.2px"></div>
<svg class="ab" style="left:718.9px;top:371.9px" width="10" height="8" viewBox="0 0 10 8"><path d="M1 6L6 1Q7 0.2 8 1L9 2Q9.8 3 9 4L5 7.5H1.5Z" fill="#f0f0f0" stroke="#909090" stroke-width="0.6"/><path d="M4 7.5H9.5" stroke="#a0a0a0" stroke-width="0.6"/></svg>
<svg class="ab" style="left:734.6px;top:372px" width="9" height="8" viewBox="0 0 9 8"><path d="M1 1L8 7M8 1L1 7" stroke="#c0c0c0" stroke-width="1.8"/></svg>
<div class="dd" style="left:748.2px;top:378px;border-left-width:2.1px;border-right-width:2.1px;border-top-width:2.3px"></div>
<div class="ab" style="left:634.5px;top:383px;width:164px;height:204px;border:1px solid #808080"></div>
<div class="t" style="left:646.5px;top:386.8px">Completion</div>
<div class="ab" style="left:635.5px;top:395.57px;width:162px;height:1px;border-top:1px dashed #b8b5ae"></div>
<div class="dd" style="left:789px;top:388.3px;border-left-width:2.7px;border-right-width:2.7px;border-top-width:2.8px"></div>
<div class="t" style="left:646.5px;top:399.13px">Due Date</div>
<div class="ab" style="left:635.5px;top:407.84px;width:162px;height:1px;border-top:1px dashed #b8b5ae"></div>
<div class="dd" style="left:789px;top:400.57px;border-left-width:2.7px;border-right-width:2.7px;border-top-width:2.8px"></div>
<div class="t" style="left:646.5px;top:411.46000000000004px">Status</div>
<div class="ab" style="left:635.5px;top:420.11px;width:162px;height:1px;border-top:1px dashed #b8b5ae"></div>
<div class="dd" style="left:789px;top:412.84000000000003px;border-left-width:2.7px;border-right-width:2.7px;border-top-width:2.8px"></div>
<div class="t" style="left:646.5px;top:423.79px">Priority</div>
<div class="ab" style="left:635.5px;top:432.38px;width:162px;height:1px;border-top:1px dashed #b8b5ae"></div>
<div class="dd" style="left:789px;top:425.11px;border-left-width:2.7px;border-right-width:2.7px;border-top-width:2.8px"></div>
<div class="t" style="left:646.5px;top:436.12px">Task Name</div>
<div class="ab" style="left:635.5px;top:444.65px;width:162px;height:1px;border-top:1px dashed #b8b5ae"></div>
<div class="t" style="left:646.5px;top:448.45px">Date Created</div>
<div class="ab" style="left:635.5px;top:456.91999999999996px;width:162px;height:1px;border-top:1px dashed #b8b5ae"></div>
<div class="dd" style="left:789px;top:449.65px;border-left-width:2.7px;border-right-width:2.7px;border-top-width:2.8px"></div>
<div class="t" style="left:646.5px;top:460.78000000000003px">Date Last Modifi</div>
<div class="ab" style="left:635.5px;top:469.19px;width:162px;height:1px;border-top:1px dashed #b8b5ae"></div>
<div class="dd" style="left:789px;top:461.92px;border-left-width:2.7px;border-right-width:2.7px;border-top-width:2.8px"></div>
<div class="t" style="left:646.5px;top:473.11px">Date Opened</div>
<div class="ab" style="left:635.5px;top:481.46px;width:162px;height:1px;border-top:1px dashed #b8b5ae"></div>
<div class="dd" style="left:789px;top:474.19px;border-left-width:2.7px;border-right-width:2.7px;border-top-width:2.8px"></div>
<div class="t" style="left:646.5px;top:485.44000000000005px">Date Completed</div>
<div class="dd" style="left:789px;top:486.46000000000004px;border-left-width:2.7px;border-right-width:2.7px;border-top-width:2.8px"></div>
<div class="ab" style="left:697px;top:384px;width:1px;height:109px;background:#a8a59e"></div>
<div class="ab" style="left:635.5px;top:493px;width:162px;height:1px;background:#808080"></div>
<div class="ab" style="left:72px;top:126.3px;width:166.8px;height:267.2px;background:#fcfcfc;border:1px solid #8a8a8a"></div>
<div class="ab" style="left:73px;top:127px;width:14.5px;height:139.5px;background:#d8d5ce"></div>
<div class="ab" style="left:73px;top:281px;width:14.5px;height:43px;background:#d8d5ce"></div>
<div class="ab" style="left:73px;top:336px;width:14.5px;height:57px;background:#d8d5ce"></div>
<div class="sep" style="left:88.3px;top:180px;width:150px"></div>
<div class="sep" style="left:88.3px;top:208.4px;width:150px"></div>
<div class="sep" style="left:88.3px;top:237.2px;width:150px"></div>
<div class="sep" style="left:88.3px;top:266.3px;width:150px"></div>
<div class="sep" style="left:88.3px;top:296.2px;width:150px"></div>
<div class="sep" style="left:88.3px;top:337.2px;width:150px"></div>
<div class="sep" style="left:88.3px;top:352.5px;width:150px"></div>
<div class="sep" style="left:73px;top:280.2px;width:165px;background:#e0ded8"></div>
<div class="ab" style="left:73px;top:298.2px;width:165px;height:12.4px;background:#b6bdd2;border:1px solid #34477a"></div>
<div class="mi" style="left:92px;top:131.4px">Create Task</div>
<div class="sc" style="left:140px;width:81px;top:131.4px">Ins</div>
<div class="mi" style="left:92px;top:144.4px">Edit Task</div>
<div class="sc" style="left:140px;width:81px;top:144.4px">F4</div>
<div class="mi" style="left:92px;top:157.4px">Delete Task(s)</div>
<div class="mi" style="left:92px;top:170.4px">Duplicate Task</div>
<div class="sc" style="left:140px;width:81px;top:170.4px">Ctrl+D</div>
<div class="mi" style="left:92px;top:185.6px">Copy Tasks</div>
<div class="sc" style="left:140px;width:81px;top:185.6px">Ctrl+C</div>
<div class="mi dis" style="left:92px;top:198.2px">Paste Tasks</div>
<div class="sc dis" style="left:140px;width:81px;top:198.2px">Ctrl+V</div>
<div class="mi" style="left:92px;top:213.8px">Task Move Up</div>
<div class="sc" style="left:140px;width:81px;top:213.8px">Ctrl+Up</div>
<div class="mi dis" style="left:92px;top:226.7px">Task Move Down</div>
<div class="sc dis" style="left:140px;width:81px;top:226.7px">Ctrl+Down</div>
<div class="mi" style="left:92px;top:243.2px">Increase Priority</div>
<div class="sc" style="left:140px;width:81px;top:243.2px">Shift+Ctrl+Up</div>
<div class="mi" style="left:92px;top:255.9px">Decrease Priority</div>
<div class="sc" style="left:140px;width:81px;top:255.9px">Shift+Ctrl+Down</div>
<div class="mi" style="left:92px;top:286.4px">Paste New Task(s)</div>
<div class="mi" style="left:92px;top:302.3px">Change Status</div>
<div class="mi" style="left:92px;top:315.3px">Change Category</div>
<div class="mi" style="left:92px;top:342.5px">Export</div>
<div class="mi" style="left:92px;top:358.2px">Always Expand</div>
<div class="mi" style="left:92px;top:371px">Expand All</div>
<div class="sc" style="left:140px;width:81px;top:371px">Ctrl+Alt+E</div>
<div class="mi" style="left:92px;top:384px">Collapse All</div>
<div class="sc" style="left:140px;width:81px;top:384px">Ctrl+Alt+C</div>
<div class="arr" style="left:231.5px;top:302.3px"></div>
<div class="arr" style="left:231.5px;top:315.3px"></div>
<div class="arr" style="left:231.5px;top:342.8px"></div>
<svg class="ab" style="left:75px;top:128.8px" width="10" height="10" viewBox="0 0 10 10"><path d="M0.5 0.8H3.5L4.5 1.8H6.5V4.5H0.5Z" fill="#f8e488" stroke="#e0c860" stroke-width="0.4"/><rect x="6.5" y="0.5" width="1.5" height="2.5" fill="#8098c8"/><rect x="1.5" y="4" width="8" height="5.5" fill="#f4f4fa" stroke="#b8c0d8" stroke-width="0.5"/><circle cx="6.8" cy="6.8" r="2" fill="#fff" stroke="#e88890" stroke-width="0.8"/><circle cx="6.8" cy="6.8" r="0.8" fill="#505060"/><rect x="3" y="5.5" width="1" height="3" fill="#9098c0"/></svg>
<svg class="ab" style="left:75px;top:141.5px" width="11" height="10" viewBox="0 0 11 10"><rect x="0.5" y="1.2" width="7" height="8" fill="#fafbff" stroke="#b0b4c8" stroke-width="0.5"/><path d="M2.2 7.8L8 2.2" stroke="#9898b8" stroke-width="1.5"/><circle cx="8.8" cy="1.4" r="1.1" fill="#f09050"/></svg>
<svg class="ab" style="left:75px;top:154px" width="10" height="10" viewBox="0 0 10 10"><path d="M0.5 2.5L2.8 0.8L2.8 4Z" fill="#90a0d0"/><path d="M4 1.2Q7 0.5 8 3.2L6.2 3.6L8.8 5.2Z" fill="#48a860"/><ellipse cx="6" cy="7.2" rx="3.2" ry="2.5" fill="#c0e0f8" stroke="#98c8e8" stroke-width="0.4"/></svg>
<svg class="ab" style="left:75.5px;top:184.2px" width="9" height="8" viewBox="0 0 9 8"><rect x="0.5" y="0.5" width="5" height="5.5" fill="#dce8f8" stroke="#a0b8d8" stroke-width="0.5"/><rect x="3" y="2" width="5.5" height="5.5" fill="#c8dcf4" stroke="#90b0d8" stroke-width="0.5"/></svg>
<svg class="ab" style="left:75.5px;top:197px" width="9" height="8" viewBox="0 0 9 8"><rect x="0.5" y="1" width="4" height="6.5" fill="#e8e8e8" stroke="#d0d0d0" stroke-width="0.5"/><rect x="4" y="3" width="4.5" height="4.5" fill="#f0f0f0" stroke="#d0d0d0" stroke-width="0.5"/></svg>
<svg class="ab" style="left:75.5px;top:212.6px" width="9" height="8.5" viewBox="0 0 9 8.5"><rect x="0.3" y="0.3" width="8.4" height="7.9" rx="1.5" fill="#3b7fd8"/><path d="M2.5 5L4.5 3L6.5 5" stroke="#fff" stroke-width="1.1" fill="none"/></svg>
<svg class="ab" style="left:75.5px;top:226px" width="9" height="8" viewBox="0 0 9 8"><rect x="0.3" y="0.3" width="8.4" height="7.6" rx="1.5" fill="#d0d0d0"/><path d="M2.5 3L4.5 5L6.5 3" stroke="#fff" stroke-width="1.1" fill="none"/></svg>
<svg class="ab" style="left:75.5px;top:241px" width="9" height="8.5" viewBox="0 0 9 8.5"><rect x="0.3" y="0.3" width="8.4" height="7.9" rx="1.5" fill="#3b7fd8"/><path d="M2.5 3.7L4.5 2L6.5 3.7M2.5 6.2L4.5 4.5L6.5 6.2" stroke="#fff" stroke-width="0.9" fill="none"/></svg>
<svg class="ab" style="left:75.5px;top:253.7px" width="9" height="8.5" viewBox="0 0 9 8.5"><rect x="0.3" y="0.3" width="8.4" height="7.9" rx="1.5" fill="#3b7fd8"/><path d="M2.5 1.8L4.5 3.5L6.5 1.8M2.5 4.3L4.5 6L6.5 4.3" stroke="#fff" stroke-width="0.9" fill="none"/></svg>
<svg class="ab" style="left:75px;top:283.5px" width="11" height="10" viewBox="0 0 11 10"><rect x="0.3" y="0.5" width="4.5" height="2.8" rx="1" fill="#e8f4fc" stroke="#7890b0" stroke-width="0.6"/><rect x="0.3" y="6.5" width="4.5" height="2.8" rx="1" fill="#e8f4fc" stroke="#7890b0" stroke-width="0.6"/><rect x="6.5" y="3.5" width="4" height="2.8" rx="1" fill="#e8f4fc" stroke="#7890b0" stroke-width="0.6"/><path d="M4.5 4.9H6.5" stroke="#50a070" stroke-width="1.2"/></svg>
<div class="mi dis" style="left:76.5px;top:271.2px">Filter Presets</div>
<div class="ab" style="left:119.4px;top:268.5px;width:117.6px;height:10.5px;border:1px solid #c8c6c0;background:#fff"></div>
<div class="ab" style="left:230.5px;top:269.5px;width:6px;height:8.5px;background:#e8e6e0"></div>
<div class="dd" style="left:231.2px;top:272.5px;border-top-color:#a0a0a0;border-left-width:2.2px;border-right-width:2.2px;border-top-width:2.2px"></div>
<div class="mi" style="left:76.5px;top:327.1px;font-size:6.75px">Set Due Date for selected tasks</div>
<div class="ab" style="left:175px;top:324.4px;width:62px;height:10.6px;border:1px solid #c8c6c0;background:#fff"></div>
<div class="mi" style="left:176.5px;top:327.3px">Bc 25.01.2009</div>
<div class="ab" style="left:230.5px;top:325.4px;width:6px;height:8.6px;background:#d8d5ce"></div>
<div class="dd" style="left:231.2px;top:328.6px;border-left-width:2.2px;border-right-width:2.2px;border-top-width:2.2px"></div>
<div class="ab" style="left:238.5px;top:298.5px;width:75px;height:79px;background:#5a7090;opacity:0.35"></div>
<div class="ab" style="left:237.5px;top:297.5px;width:75px;height:79px;background:#fcfcfc;border:1px solid #8a8a8a"></div>
<div class="ab" style="left:238.5px;top:298.5px;width:14px;height:77px;background:#d8d5ce"></div>
<div class="ab" style="left:239px;top:311.5px;width:72.5px;height:12px;background:#b6bdd2;border:1px solid #34477a"></div>
<div class="mi" style="left:257.7px;top:301.6px">Created</div>
<div class="mi" style="left:257.7px;top:315px">Open</div>
<div class="mi" style="left:257.7px;top:328px">Waiting</div>
<div class="mi" style="left:257.7px;top:341px">Put On Hold</div>
<div class="mi" style="left:257.7px;top:354px">Cancelled</div>
<div class="mi" style="left:257.7px;top:367px">Ok</div>
<svg class="ab" style="left:240.5px;top:300px" width="10" height="10" viewBox="0 0 10 10"><path d="M1.5 0.5H6L8.5 3V9.5H1.5Z" fill="#f0f6fc" stroke="#b0c0d8" stroke-width="0.6"/></svg>
<svg class="ab" style="left:240px;top:312.5px" width="11" height="10" viewBox="0 0 11 10"><circle cx="5.2" cy="5" r="4.5" fill="#e87a20" stroke="#b05010" stroke-width="0.6"/><path d="M4 2.8L7 5L4 7.2Z" fill="#fff"/></svg>
<svg class="ab" style="left:240px;top:325.5px" width="11" height="10" viewBox="0 0 11 10"><circle cx="5.2" cy="5.5" r="4" fill="#d8e8fc" stroke="#4a80d8" stroke-width="1"/><rect x="4" y="0.3" width="2.4" height="1.2" fill="#4a80d8"/><path d="M5.2 3.5V5.5H6.8" stroke="#4a80d8" stroke-width="0.7" fill="none"/></svg>
<svg class="ab" style="left:240px;top:338.5px" width="11" height="10" viewBox="0 0 11 10"><circle cx="5.2" cy="5" r="4.5" fill="#f0a050" stroke="#d08030" stroke-width="0.4"/><rect x="3.7" y="3" width="1" height="4" fill="#fde0c0"/><rect x="5.7" y="3" width="1" height="4" fill="#fde0c0"/></svg>
<svg class="ab" style="left:240px;top:351.5px" width="11" height="10" viewBox="0 0 11 10"><circle cx="5.2" cy="5" r="4.5" fill="#e05040" stroke="#c03020" stroke-width="0.4"/><path d="M3.5 3.3L6.9 6.7M6.9 3.3L3.5 6.7" stroke="#fff" stroke-width="1"/></svg>
<svg class="ab" style="left:240px;top:364.5px" width="11" height="10" viewBox="0 0 11 10"><circle cx="5.2" cy="5" r="4.5" fill="#f8c890" stroke="#e8a060" stroke-width="0.5"/><circle cx="5.2" cy="5" r="2.6" fill="none" stroke="#fff" stroke-width="0.8"/></svg>
</div></body></html>
